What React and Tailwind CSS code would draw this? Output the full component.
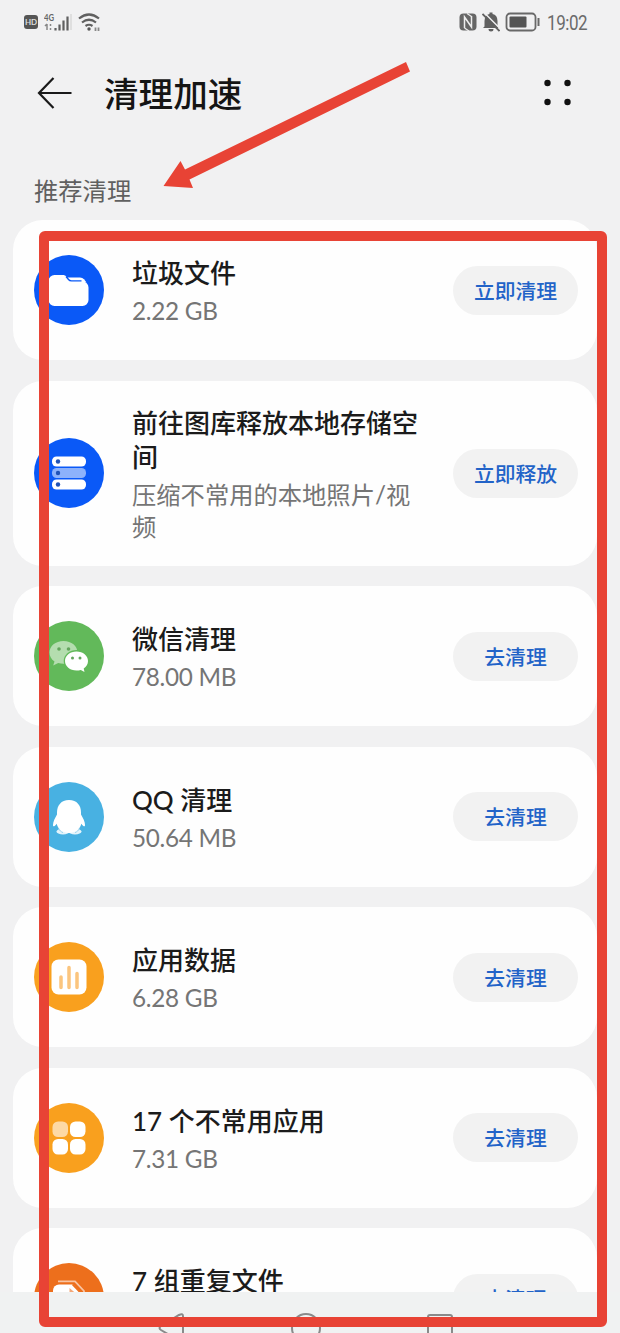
import React from 'react';

const JunkIcon = () => (
    <svg viewBox="0 0 70 70" className="w-[70px] h-[70px] shrink-0">
        <circle cx="35" cy="35" r="35" fill="#0a59f7" />
        <path d="M14.500 26a6 6 0 0 1 6-6h8c2 0 3 .6 4.300 2l2.500 3c.9 1 1.800 1.500 3.500 1.500h9.700a6 6 0 0 1 6 6V45a6 6 0 0 1-6 6h-28a6 6 0 0 1-6-6z" fill="#fff" />
        <path d="M33.500 22.500h12.500q2.500 0 4 1.700l2.500 3.300H38q-1.500 0-2.500-1.500z" fill="#fff" />
        <path d="M32 21.500l2.500 3q1 1.300 3 1.300h10" fill="none" stroke="#0a59f7" strokeWidth="1.300" />
    </svg>
);

const GalleryIcon = () => (
    <svg viewBox="0 0 70 70" className="w-[70px] h-[70px] shrink-0">
        <circle cx="35" cy="35" r="35" fill="#0a59f7" />
        <rect x="18" y="18.500" width="34" height="10" rx="4.500" fill="#fff" />
        <rect x="18" y="30" width="34" height="10" rx="4.500" fill="#8db2fb" />
        <rect x="18" y="41.500" width="34" height="10" rx="4.500" fill="#fff" />
        <circle cx="24" cy="23.500" r="2.200" fill="#1f52b8" />
        <circle cx="24" cy="35" r="2.200" fill="#1f52b8" />
        <circle cx="24" cy="46.500" r="2.200" fill="#1f52b8" />
    </svg>
);

const WechatIcon = () => (
    <svg viewBox="0 0 70 70" className="w-[70px] h-[70px] shrink-0">
        <circle cx="35" cy="35" r="35" fill="#62b95a" />
        <path d="M29.500 20C21.500 20 15.500 25 15.500 31.500c0 3.700 1.800 6.800 5 9l-1.300 4 5-2.500c1.700.5 3.500.7 5.300.7C37.500 42.700 43.500 38 43.500 31.500S37.500 20 29.500 20z" fill="#b4ddaf" />
        <ellipse cx="42.500" cy="40" rx="12.800" ry="11" fill="#62b95a" />
        <path d="M42.500 30.500c-6.500 0-11.500 4.200-11.500 9.500s5 9.500 11.500 9.500c1.500 0 3-.2 4.300-.6l3.700 2-.8-3.500c2.700-1.700 4.300-4.300 4.300-7.400 0-5.300-5-9.500-11.500-9.500z" fill="#fff" />
        <circle cx="25" cy="28" r="1.800" fill="#62a55c" />
        <circle cx="34.500" cy="28" r="1.800" fill="#62a55c" />
        <circle cx="38.500" cy="37" r="1.500" fill="#62a55c" />
        <circle cx="46" cy="37" r="1.500" fill="#62a55c" />
    </svg>
);

const QQIcon = () => (
    <svg viewBox="0 0 70 70" className="w-[70px] h-[70px] shrink-0">
        <circle cx="35" cy="35" r="35" fill="#48b1e2" />
        <ellipse cx="29" cy="49.500" rx="6.500" ry="3" fill="#e4f4fb" />
        <ellipse cx="41" cy="49.500" rx="6.500" ry="3" fill="#e4f4fb" />
        <path d="M35 18c-8 0-12 5.500-12 12.500v2c-2 3.500-4 7-4 10.500 0 2 1.200 2 3.700-1.300C24 47 28.500 51 35 51s11-4 12.300-9.300c2.500 3.300 3.700 3.300 3.700 1.300 0-3.500-2-7-4-10.500v-2C47 23.500 43 18 35 18z" fill="#fff" />
        <path d="M24.500 46.500c1 2 2.500 3.300 4.500 4.200M45.500 46.500c-1 2-2.500 3.300-4.500 4.200" fill="none" stroke="#9fd5ef" strokeWidth="1" />
    </svg>
);

const AppDataIcon = () => (
    <svg viewBox="0 0 70 70" className="w-[70px] h-[70px] shrink-0">
        <circle cx="35" cy="35" r="35" fill="#f9a01e" />
        <rect x="17.500" y="17.500" width="35" height="35" rx="7" fill="#fff" />
        <path d="M27 35v10.500M35 25.500v20M43 31.500v14" stroke="#fbc57e" strokeWidth="3.500" strokeLinecap="round" />
    </svg>
);

const UnusedAppsIcon = () => (
    <svg viewBox="0 0 70 70" className="w-[70px] h-[70px] shrink-0">
        <circle cx="35" cy="35" r="35" fill="#f9a01e" />
        <rect x="18.500" y="18.500" width="15.500" height="15.500" rx="5.500" fill="#fdd9a5" />
        <rect x="36" y="18.500" width="15.500" height="15.500" rx="5.500" fill="#fff" />
        <rect x="18.500" y="36" width="15.500" height="15.500" rx="5.500" fill="#fff" />
        <rect x="36" y="36" width="15.500" height="15.500" rx="5.500" fill="#fff" />
    </svg>
);

const DuplicateIcon = () => (
    <svg viewBox="0 0 70 70" className="w-[70px] h-[70px] shrink-0">
        <circle cx="35" cy="35" r="35" fill="#ed6f1c" />
        <path d="M24 18.300h17L50 28v18" fill="none" stroke="#f8c5a4" strokeWidth="1.800" />
        <path d="M19 52V27.500a6 6 0 0 1 6-6h14l8 8.500v22z" fill="#fff" />
        <path d="M35.500 25v6h7z" fill="#f3a87a" />
        <path d="M38.500 21.500L47 30.500" stroke="#ed6f1c" strokeWidth="1.500" />
    </svg>
);

const items = [
    { icon: JunkIcon, title: '垃圾文件', size: '2.22 GB', action: '立即清理', height: 'h-[140px]' },
    { icon: GalleryIcon, title: '前往图库释放本地存储空间', desc: '压缩不常用的本地照片/视频', action: '立即释放', height: 'h-[185px]' },
    { icon: WechatIcon, title: '微信清理', size: '78.00 MB', action: '去清理', height: 'h-[140px]' },
    { icon: QQIcon, title: 'QQ 清理', size: '50.64 MB', action: '去清理', height: 'h-[140px]' },
    { icon: AppDataIcon, title: '应用数据', size: '6.28 GB', action: '去清理', height: 'h-[140px]' },
    { icon: UnusedAppsIcon, title: '17 个不常用应用', size: '7.31 GB', action: '去清理', height: 'h-[140px]' },
    { icon: DuplicateIcon, title: '7 组重复文件', action: '去清理', height: 'h-[140px]' },
];

const StatusBar = () => (
    <div className="flex h-[44px] items-center justify-between pl-6 pr-[33px]">
        <div className="flex items-center">
            <div className="flex h-[14px] w-[14px] items-center justify-center rounded-[3px] bg-[#555] text-[8px] font-bold text-[#ddd]">HD</div>
            <svg viewBox="0 0 28 20" className="ml-[6px] h-[20px] w-[28px]">
                <text x="0" y="9" fontSize="10" fontWeight="700" fill="#666" textLength="10" lengthAdjust="spacingAndGlyphs">4G</text>
                <path d="M3 12v6M1 14l2-2M6.500 12v2M6.500 16v2" stroke="#888" strokeWidth="1.500" fill="none" />
                <path d="M11.500 16v2.500M15.500 12.500v6M19.500 8.500v10M23.500 4.500v14" stroke="#606060" strokeWidth="2.200" />
                <path d="M27 2v16" stroke="#d8d8d8" strokeWidth="1.500" />
            </svg>
            <svg viewBox="0 0 24 20" className="ml-[6px] h-[20px] w-[24px]">
                <path d="M1 6.500q10-8 20 0M4 10.500q7-5.500 14 0M7.500 14q3.500-2.500 7 0" fill="none" stroke="#606060" strokeWidth="2.200" />
                <circle cx="11" cy="17" r="1.700" fill="#555" />
                <path d="M17.500 15.500v3.500M20.500 15.500v3.500" stroke="#888" strokeWidth="1.800" />
            </svg>
        </div>
        <div className="flex items-center">
            <svg viewBox="0 0 18 18" className="h-[18px] w-[18px]">
                <rect x="0.500" y="0.500" width="17" height="17" rx="4" fill="#666" />
                <path d="M5.500 15V4l7 10V3" fill="none" stroke="#eee" strokeWidth="1.500" />
                <path d="M8 .5l4.500 3M5.500 15l4.500 3" stroke="#eee" strokeWidth="1.200" />
            </svg>
            <svg viewBox="0 0 18 20" className="ml-[5px] h-[20px] w-[18px]">
                <path d="M2.500 14.500V9q0-6 5-7V.500h3V2q5 1 5 7v5.500L17 16H1zM6.500 17h5q0 2.500-2.500 2.500T6.500 17" fill="#606060" />
                <path d="M2 .5l16 16" stroke="#f1f1f2" strokeWidth="1.500" />
                <path d="M.5 2l17 17" stroke="#606060" strokeWidth="1.800" />
            </svg>
            <svg viewBox="0 0 36 20" className="ml-[5px] h-[20px] w-[36px]">
                <rect x="1.500" y="1.500" width="29" height="17" rx="3.500" fill="none" stroke="#686868" strokeWidth="1.800" />
                <rect x="4.500" y="4.500" width="17" height="11" rx="1" fill="#555" />
                <path d="M33.500 6v8" stroke="#686868" strokeWidth="2" />
            </svg>
            <span className="ml-[6px] w-[40px] whitespace-nowrap pt-px font-['Roboto'] text-[20px] leading-none text-[#6b6b6b]">
                <span className="inline-block origin-left scale-x-[0.85] tracking-[-0.500px]">19:02</span>
            </span>
        </div>
    </div>
);

const Header = () => (
    <div className="flex h-[98px] items-center pl-[36px] pr-[47px]">
        <svg viewBox="0 0 38 34" className="h-[34px] w-[38px]">
            <path d="M35.500 17H3M17.500 2L3 17l14.500 15" fill="none" stroke="#1a1a1a" strokeWidth="2.200" />
        </svg>
        <h1 className="ml-[30px] pt-[3px] text-[34.600px] font-medium leading-none text-[#151515]">清理加速</h1>
        <svg viewBox="0 0 30 28" className="ml-auto h-[28px] w-[30px]">
            <g fill="#111">
                <circle cx="4.500" cy="4" r="3.200" />
                <circle cx="24.500" cy="4" r="3.200" />
                <circle cx="4.500" cy="23" r="3.200" />
                <circle cx="24.500" cy="23" r="3.200" />
            </g>
        </svg>
    </div>
);

const CleanCard = ({ item }) => {
    const Icon = item.icon;
    return (
        <div className={`flex shrink-0 items-center rounded-[30px] bg-[#fefefe] pl-[21px] pr-[19px] ${item.height}`}>
            <Icon />
            <div className="ml-7 mr-[26px] min-w-0 flex-1 pt-[3px]">
                <div className="text-[26px] font-medium leading-[34px] text-[#1b1b1b]">{item.title}</div>
                <div className="mt-[5px] min-h-[32px] text-[24.300px] leading-[32px] text-[#757575]">
                    {item.size ? <span className="tracking-[-0.300px]">{item.size}</span> : item.desc}
                </div>
            </div>
            <button className="h-[49px] w-[125px] shrink-0 rounded-full bg-[#f2f2f2] pt-px text-[20.800px] font-medium text-[#2263c8]">{item.action}</button>
        </div>
    );
};

export default function App() {
    return (
        <div className="relative flex h-[1333px] w-[620px] flex-col overflow-hidden bg-[#f1f1f2] font-['Lato','Noto_Sans_CJK_SC',sans-serif]">
            <StatusBar />
            <Header />
            <div className="flex h-[78px] items-center pl-[34px] pt-[20px] text-[24.300px] leading-none text-[#606060]">推荐清理</div>
            <div className="flex h-[1072px] shrink-0 flex-col gap-[20.500px] overflow-hidden pl-[13px] pr-[23px]">
                {items.map(item => <CleanCard key={item.title} item={item} />)}
            </div>
            <div className="flex h-[41px] shrink-0 justify-center bg-[#f0f2f2]">
                <svg viewBox="0 0 620 41" className="h-[41px] w-[620px]">
                    <g fill="none" stroke="#8a8a8a" strokeWidth="2">
                        <path d="M183 48V24q0-3-4-1L161 34q-3 2 0 4l22 13" />
                        <circle cx="306" cy="36" r="14" />
                        <rect x="428" y="23" width="24" height="26" rx="2" />
                    </g>
                </svg>
            </div>

            {/* highlight frame and pointer over the list */}
            <div className="absolute left-[39px] top-[231px] h-[1096px] w-[568px] rounded-[6px] border-[10.500px] border-[#e84335]" />
            <svg viewBox="0 0 620 220" className="absolute left-0 top-0 h-[220px] w-[620px]">
                <path d="M406 62l4 9.500L189.500 179.500l3.500 8.500-29.500-2L180.500 161l4.500 8.500z" fill="#e84335" />
            </svg>
        </div>
    );
}
